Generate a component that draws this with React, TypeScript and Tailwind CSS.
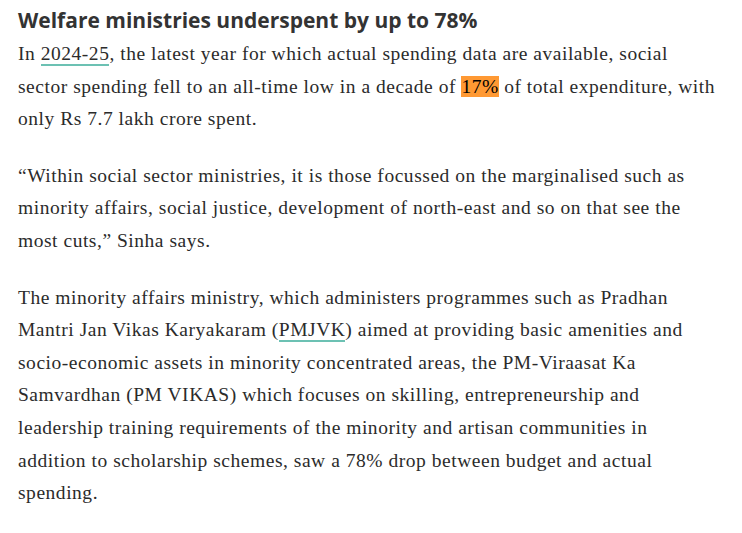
import React from "react";

const serif = { fontFamily: '"Liberation Serif", "DejaVu Serif", serif' };

export default function App() {
  return (
    <div className="min-h-screen bg-white pl-[18px] pt-[6px] text-[#333]">
      <h2
        className="text-[21px] font-bold leading-[29px] text-[#333]"
        style={{ fontFamily: '"Open Sans", sans-serif' }}
      >
        Welfare ministries underspent by up to 78%
      </h2>
      <div className="mt-[3px] text-[19.5px] leading-[32.6px] tracking-[0.53px] text-[#2b2b2b]" style={serif}>
        <p>
          In{" "}
          <span className="border-b-2 border-[#6cc1b3]">2024-25</span>, the latest year for which actual spending data are available, social
          <br />
          sector spending fell to an all-time low in a decade of{" "}
          <span className="bg-[#ff9933] text-black">17%</span> of total expenditure, with
          <br />
          only Rs 7.7 lakh crore spent.
        </p>
        <p className="mt-[24px]">
          “Within social sector ministries, it is those focussed on the marginalised such as
          <br />
          minority affairs, social justice, development of north-east and so on that see the
          <br />
          most cuts,” Sinha says.
        </p>
        <p className="mt-[24px]">
          The minority affairs ministry, which administers programmes such as Pradhan
          <br />
          Mantri Jan Vikas Karyakaram (
          <span className="border-b-2 border-[#6cc1b3]">PMJVK</span>) aimed at providing basic amenities and
          <br />
          socio-economic assets in minority concentrated areas, the PM-Viraasat Ka
          <br />
          Samvardhan (PM VIKAS) which focuses on skilling, entrepreneurship and
          <br />
          leadership training requirements of the minority and artisan communities in
          <br />
          addition to scholarship schemes, saw a 78% drop between budget and actual
          <br />
          spending.
        </p>
      </div>
    </div>
  );
}
